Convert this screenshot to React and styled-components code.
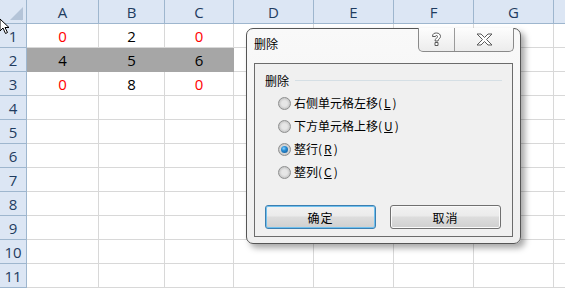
import React from 'react';
import styled, { createGlobalStyle } from 'styled-components';

const GlobalStyle = createGlobalStyle`
  html, body {
    margin: 0;
    padding: 0;
    background: #ffffff;
    overflow: hidden;
  }
  body {
    font-family: "Liberation Sans", Arial, sans-serif;
  }
`;

const COLS = [
  { label: '', width: 27 },
  { label: 'A', width: 72 },
  { label: 'B', width: 66 },
  { label: 'C', width: 69 },
  { label: 'D', width: 80 },
  { label: 'E', width: 80 },
  { label: 'F', width: 80 },
  { label: 'G', width: 80 },
  { label: '', width: 40 },
];

const DATA = {
  1: [{ v: '0', red: true }, { v: '2' }, { v: '0', red: true }],
  2: [{ v: '4' }, { v: '5' }, { v: '6' }],
  3: [{ v: '0', red: true }, { v: '8' }, { v: '0', red: true }],
};

const Page = styled.div`
  position: relative;
  width: 565px;
  height: 288px;
  overflow: hidden;
`;

const Sheet = styled.div`
  display: grid;
  grid-template-columns: ${({ $cols }) => $cols};
  grid-auto-rows: 24px;
`;

const HeadCell = styled.div`
  box-sizing: border-box;
  background: #dce6f4;
  border-right: 1px solid #9eb6ce;
  border-bottom: 1px solid #9eb6ce;
  color: #1f3c60;
  font-family: "Open Sans", "Liberation Sans", sans-serif;
  font-size: 15px;
  display: flex;
  align-items: center;
  justify-content: center;
  position: relative;
`;

const Corner = styled(HeadCell)`
  &::after {
    content: '';
    position: absolute;
    right: 3px;
    bottom: 3px;
    width: 0;
    height: 0;
    border-left: 13px solid transparent;
    border-bottom: 13px solid #b4c4d8;
  }
`;

const Cell = styled.div`
  box-sizing: border-box;
  border-right: 1px solid #d8d8d8;
  border-bottom: 1px solid #d8d8d8;
  background: ${({ $shaded }) => ($shaded ? '#a6a6a6' : '#ffffff')};
  border-color: ${({ $shaded }) => ($shaded ? '#a6a6a6' : '#d8d8d8')};
  color: ${({ $red }) => ($red ? '#ff0000' : '#000000')};
  font-family: "Open Sans", "Liberation Sans", sans-serif;
  font-size: 15px;
  display: flex;
  align-items: center;
  justify-content: center;
`;

const Cursor = styled.svg`
  position: absolute;
  left: 0;
  top: 18px;
`;

const Dialog = styled.div`
  position: absolute;
  left: 246px;
  top: 28px;
  width: 275px;
  height: 216px;
  box-sizing: border-box;
  background: linear-gradient(#f9f9f9, #efefef);
  border: 1px solid #555555;
  border-radius: 7px;
  box-shadow: 4px 4px 6px rgba(0, 0, 0, 0.35);
  display: flex;
  flex-direction: column;
  padding: 0 7px 6px 7px;
  font-family: "Noto Sans CJK SC", "Liberation Sans", sans-serif;
  font-size: 12px;
  color: #000000;
`;

const TitleBar = styled.div`
  height: 34px;
  display: flex;
  justify-content: space-between;
  align-items: flex-start;
`;

const Title = styled.div`
  margin-top: 7px;
  font-size: 12px;
  line-height: 16px;
`;

const CaptionButtons = styled.div`
  display: flex;
  margin-top: -1px;
  margin-right: -1px;
  height: 24px;
  box-sizing: border-box;
  border: 1px solid #8a8a8a;
  border-top: none;
  border-radius: 0 0 5px 5px;
  background: linear-gradient(#fdfdfd, #ececec);
`;

const CaptionButton = styled.div`
  width: ${({ $w }) => $w}px;
  display: flex;
  align-items: center;
  justify-content: center;
  & + & {
    border-left: 1px solid #9a9a9a;
  }
`;

const Client = styled.div`
  flex: 1;
  box-sizing: border-box;
  background: #f0f0f0;
  border: 1px solid #6b6b6b;
  padding: 9px 10px 0 10px;
  display: flex;
  flex-direction: column;
`;

const GroupHead = styled.div`
  display: flex;
  align-items: center;
  gap: 6px;
  line-height: 16px;
  padding-right: 0;
  &::after {
    content: '';
    flex: 1;
    height: 1px;
    background: #d5dfe5;
    margin-top: -2px;
  }
`;

const Options = styled.div`
  display: flex;
  flex-direction: column;
  padding-left: 13px;
  margin-top: 6px;
  gap: 7px;
`;

const Option = styled.label`
  display: flex;
  align-items: center;
  gap: 2px;
  height: 16px;
  line-height: 16px;
  white-space: nowrap;
`;

const Radio = styled.span`
  width: 13px;
  height: 13px;
  box-sizing: border-box;
  border-radius: 50%;
  border: 1px solid #8e8f8f;
  background: radial-gradient(circle at 50% 50%, #e6e6e6 0, #e6e6e6 35%, #c8c8c8 70%, #f4f4f4 100%);
  display: inline-flex;
  align-items: center;
  justify-content: center;
  margin-right: 1px;
  &::after {
    content: '';
    display: ${({ $checked }) => ($checked ? 'block' : 'none')};
    width: 7px;
    height: 7px;
    border-radius: 50%;
    background: radial-gradient(circle at 40% 35%, #8fd3ff 0, #2a8fd6 35%, #0f4f8c 100%);
  }
`;

const Key = styled.span`
  text-decoration: underline;
`;

const Buttons = styled.div`
  display: flex;
  justify-content: space-between;
  margin-top: 25px;
  padding-right: 1px;
`;

const Button = styled.button`
  width: 111px;
  height: 24px;
  box-sizing: border-box;
  border-radius: 3px;
  border: 1px solid ${({ $focused }) => ($focused ? '#3c7fb1' : '#707070')};
  background: linear-gradient(#f2f2f2 0, #ebebeb 45%, #dddddd 50%, #cfcfcf 100%);
  box-shadow: ${({ $focused }) =>
    $focused ? 'inset 0 0 0 1px #6fc0ee' : 'inset 0 0 0 1px #fafafa'};
  font-family: "Noto Sans CJK SC", "Liberation Sans", sans-serif;
  font-size: 12px;
  color: #000000;
  padding: 0;
  letter-spacing: 1px;
`;

const options = [
  { text: '右侧单元格左移', key: 'L' },
  { text: '下方单元格上移', key: 'U' },
  { text: '整行', key: 'R', checked: true },
  { text: '整列', key: 'C' },
];

export default function App() {
  const cols = COLS.map((c) => `${c.width}px`).join(' ');
  const rows = Array.from({ length: 11 }, (_, i) => i + 1);

  return (
    <>
      <GlobalStyle />
      <Page>
        <Sheet $cols={cols}>
          {COLS.map((c, i) =>
            i === 0 ? <Corner key="corner" /> : <HeadCell key={`h${i}`}>{c.label}</HeadCell>
          )}
          {rows.map((r) => (
            <React.Fragment key={r}>
              <HeadCell>{r}</HeadCell>
              {COLS.slice(1).map((c, ci) => {
                const d = DATA[r] && DATA[r][ci];
                const shaded = r === 2 && ci < 3;
                return (
                  <Cell key={ci} $shaded={shaded} $red={d && d.red}>
                    {d ? d.v : ''}
                  </Cell>
                );
              })}
            </React.Fragment>
          ))}
        </Sheet>

        <Cursor width="12" height="18" viewBox="0 0 12 18">
          <path d="M0 1 L0 13 L3 10 L5.5 15.5 L7.5 14.5 L5 9.5 L9 9.5 Z" fill="#ffffff" stroke="#000000" strokeWidth="1" />
        </Cursor>

        <Dialog>
          <TitleBar>
            <Title>删除</Title>
            <CaptionButtons>
              <CaptionButton $w={35}>
                <svg width="11" height="15" viewBox="0 0 11 15">
                  <path d="M1.5 4.5 C1.5 1.5 3.5 1 5.5 1 C8 1 9.5 2.5 9.5 4.5 C9.5 6.5 7 7 7 9 L4 9 C4 6.5 6.5 6 6.5 4.5 C6.5 3.8 6 3.5 5.5 3.5 C4.8 3.5 4.5 4 4.5 4.5 Z M4 10.5 L7 10.5 L7 13.5 L4 13.5 Z" fill="#ffffff" stroke="#5a5a5a" strokeWidth="1" />
                </svg>
              </CaptionButton>
              <CaptionButton $w={58}>
                <svg width="17" height="13" viewBox="0 0 17 13">
                  <path d="M1 1 L5 1 L8.5 4.5 L12 1 L16 1 L10.5 6.5 L16 12 L12 12 L8.5 8.5 L5 12 L1 12 L6.5 6.5 Z" fill="#ffffff" stroke="#5a5a5a" strokeWidth="1" />
                </svg>
              </CaptionButton>
            </CaptionButtons>
          </TitleBar>
          <Client>
            <GroupHead>删除</GroupHead>
            <Options>
              {options.map((o) => (
                <Option key={o.key}>
                  <Radio $checked={o.checked} />
                  {o.text}(<Key>{o.key}</Key>)
                </Option>
              ))}
            </Options>
            <Buttons>
              <Button $focused>确定</Button>
              <Button>取消</Button>
            </Buttons>
          </Client>
        </Dialog>
      </Page>
    </>
  );
}
